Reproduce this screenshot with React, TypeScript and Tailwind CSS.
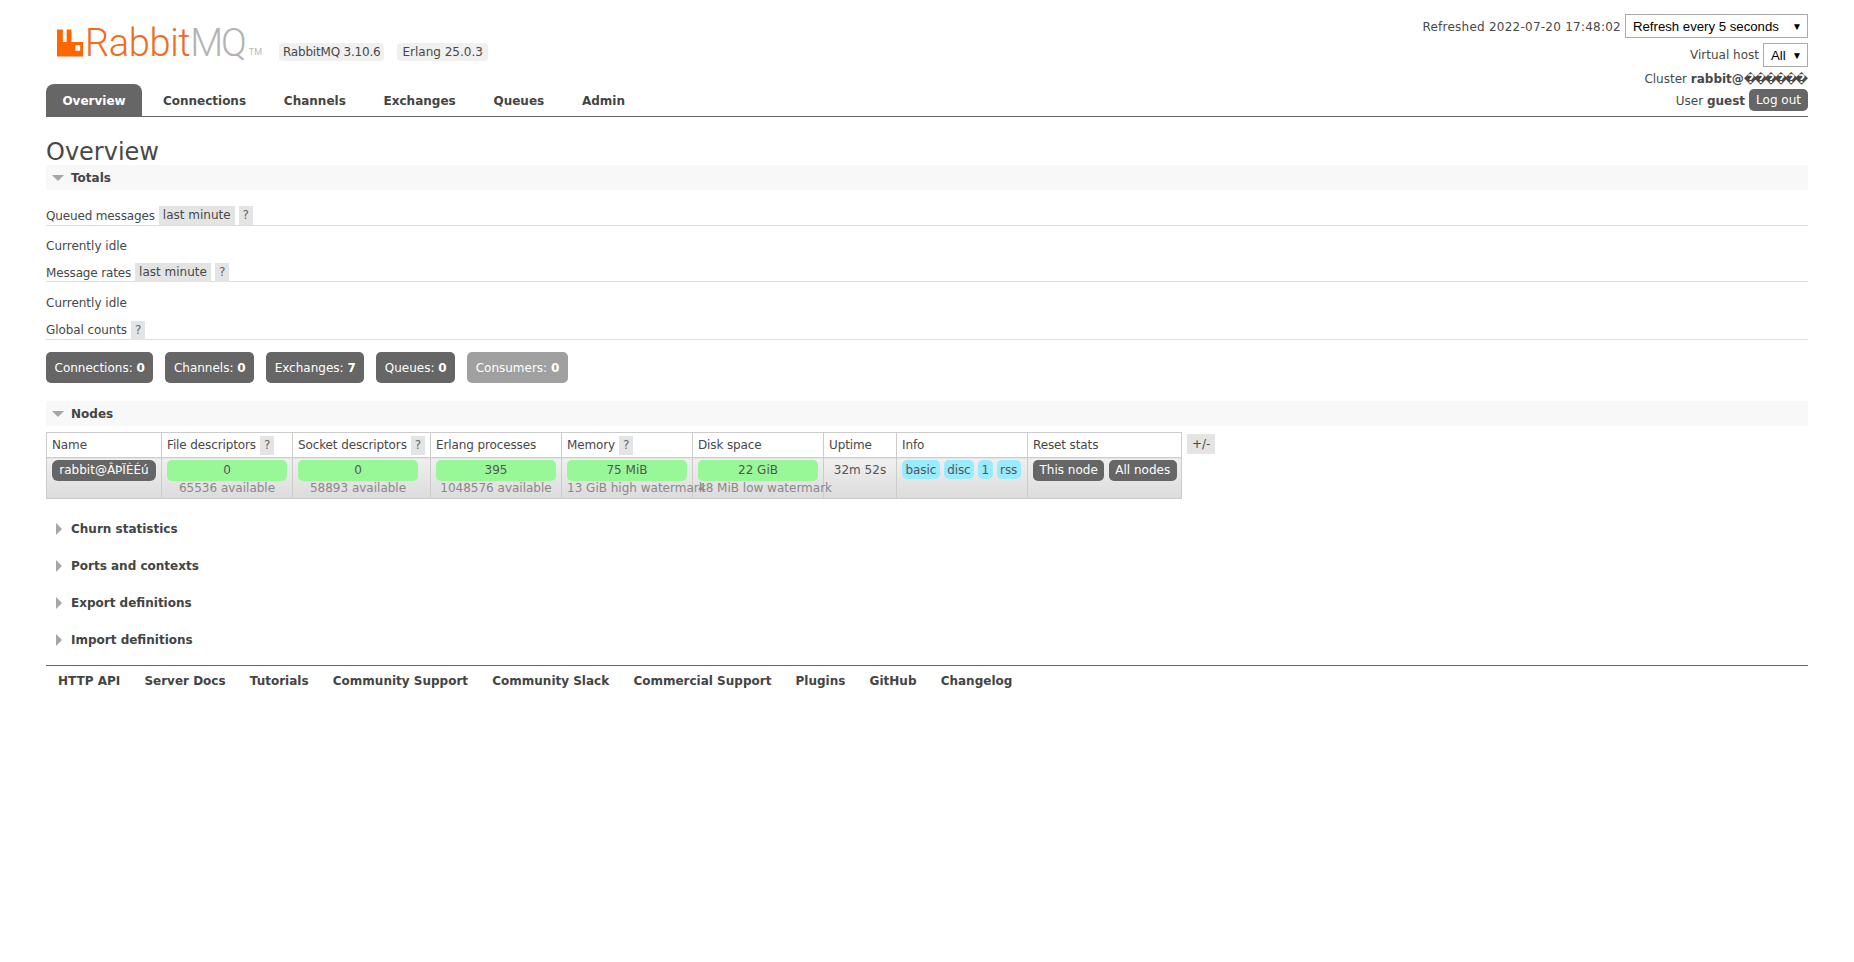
const TABS = ["Overview", "Connections", "Channels", "Exchanges", "Queues", "Admin"];
const FOOTER = ["HTTP API", "Server Docs", "Tutorials", "Community Support", "Community Slack", "Commercial Support", "Plugins", "GitHub", "Changelog"];
const COUNTS = [
  { label: "Connections:", value: "0" },
  { label: "Channels:", value: "0" },
  { label: "Exchanges:", value: "7" },
  { label: "Queues:", value: "0" },
  { label: "Consumers:", value: "0", disabled: true },
];
const COLLAPSED = ["Churn statistics", "Ports and contexts", "Export definitions", "Import definitions"];

function Help() {
  return <span className="ml-[4px] inline-block h-[19px] bg-[#e4e4e4] px-[4px] leading-[19px] tracking-normal text-[#666]">?</span>;
}

function SelectBox({ label, className }: { label: string; className: string }) {
  return (
    <div className={"flex items-center justify-between border border-[#aaa] bg-white pl-[7px] pr-[5px] font-['Liberation_Sans',sans-serif] text-[13.2px] text-black " + className}>
      <span className="pt-[1px]">{label}</span>
      <span className="text-[10px]">▼</span>
    </div>
  );
}

function SectionHeader({ title, open }: { title: string; open?: boolean }) {
  return (
    <div className={"flex h-[25px] items-center " + (open ? "bg-[#f8f8f8]" : "")}>
      <div className="flex w-[25px] justify-center">
        {open ? (
          <svg width="12" height="6" viewBox="0 0 12 6" className="ml-[-1px]"><path d="M0 0h12L6 6z" fill="#a6a6a6" /></svg>
        ) : (
          <svg width="6" height="12" viewBox="0 0 6 12" className="ml-[1px]"><path d="M0 0v12l6-6z" fill="#a6a6a6" /></svg>
        )}
      </div>
      <h2 className="text-[12px] font-bold text-[#444]">{title}</h2>
    </div>
  );
}

function Logo() {
  return (
    <div className="flex w-[205px] items-end">
      <svg width="27" height="28" viewBox="0 0 27 28" className="mb-[2px]">
        <path fillRule="evenodd" fill="#ff6600" d="M0 0h6v13h4V0h5v13h12v15H0zM19 16v6h5v-6z" />
      </svg>
      <span className="ml-[2px] font-['Roboto',sans-serif] text-[38px] font-light leading-[32px] tracking-[-0.4px] text-[#f26b1d]">Rabbit</span>
      <span className="font-['Roboto',sans-serif] text-[38px] font-light leading-[32px] tracking-[-2px] text-[#b3b3b3]">MQ</span>
      <span className="mb-[2px] ml-[4px] font-['Roboto',sans-serif] text-[9px] leading-[10px] text-[#bbb]">TM</span>
    </div>
  );
}

function Bar({ value, sub }: { value: string; sub: string }) {
  return (
    <div className="w-[120px] whitespace-nowrap text-center">
      <div className="h-[21px] rounded-[5px] bg-[#98f898] leading-[21px] text-[#555]">{value}</div>
      <div className="leading-[15px] text-[#888]">{sub}</div>
    </div>
  );
}

const cell = "border border-[#ccc] bg-gradient-to-b from-[#f0f0f0] to-[#dcdcdc] px-[5px] pt-[2px] align-top";
const head = "h-[25px] whitespace-nowrap border border-[#ccc] bg-white px-[5px] text-left font-normal tracking-[-0.12px] text-[#484848]";

function Badge({ children }: { children: string }) {
  return <span className="inline-block h-[19px] rounded-[5px] bg-[#99ebff] px-[3.5px] leading-[20px] tracking-[-0.1px] text-[#555]">{children}</span>;
}

function DarkButton({ children }: { children: string }) {
  return <span className="inline-block h-[21px] whitespace-nowrap rounded-[5px] bg-[#666] px-[6.5px] font-normal leading-[21px] text-white">{children}</span>;
}

export default function App() {
  return (
    <div className="min-h-[962px] bg-white px-[46px] font-['DejaVu_Sans','Verdana',sans-serif] text-[12px] text-[#484848]">
      {/* Header */}
      <header className="flex h-[117px] justify-between border-b border-[#666]">
        <div className="flex flex-col justify-between">
          <div className="flex items-end pl-[11px] pt-[27px]">
            <Logo />
            <span className="mb-[-2px] ml-[17px] rounded-[4px] bg-[#f0f0f0] px-[4px] py-[2px] leading-[14px] tracking-[-0.2px]">RabbitMQ 3.10.6</span>
            <span className="mb-[-2px] ml-[13px] rounded-[4px] bg-[#f0f0f0] px-[5px] py-[2px] leading-[14px]">Erlang 25.0.3</span>
          </div>
          <nav className="flex">
            {TABS.map((tab, i) => (
              <a
                key={tab}
                className={
                  "flex h-[32px] items-center pt-[2px] font-bold " +
                  (i === 0 ? "mr-[2px] w-[96px] justify-center rounded-t-[8px] bg-[#666] text-white" : "px-[18.9px] text-[#444]")
                }
              >
                {tab}
              </a>
            ))}
          </nav>
        </div>
        <div className="flex flex-col items-end pt-[14px]">
          <div className="flex h-[24px] items-center gap-[4px]">
            <span className="pt-[1px] tracking-[0.24px]">Refreshed 2022-07-20 17:48:02</span>
            <SelectBox label="Refresh every 5 seconds" className="h-[24px] w-[183px]" />
          </div>
          <div className="mt-[5px] flex h-[24px] items-center gap-[4px]">
            <span>Virtual host</span>
            <SelectBox label="All" className="h-[24px] w-[45px]" />
          </div>
          <div className="mt-[2px] h-[20px] leading-[20px]">
            Cluster <b>rabbit@<span className="mr-[3.2px] tracking-[-3.2px]">������</span></b>
          </div>
          <div className="flex items-center gap-[4px]">
            <span className="pt-[1px]">
              User <b>guest</b>
            </span>
            <span className="h-[22px] rounded-[5px] bg-[#666] px-[7px] leading-[22px] text-white">Log out</span>
          </div>
        </div>
      </header>

      <h1 className="mt-[21px] h-[27px] text-[24px] font-normal leading-[28px] text-[#484848]">Overview</h1>

      {/* Totals */}
      <SectionHeader title="Totals" open />
      <div className="mt-[15px] flex h-[21px] items-center border-b border-[#ddd] pt-[1px]">
        <span className="tracking-[-0.15px]">Queued messages</span>
        <span className="ml-[4px] h-[19px] bg-[#e4e4e4] px-[4px] leading-[19px]">last minute</span>
        <Help />
      </div>
      <p className="mt-[13px] h-[14px] leading-[14px]">Currently idle</p>
      <div className="mt-[7px] flex h-[22px] items-center border-b border-[#ddd] pt-[4px]">
        <span className="tracking-[-0.15px]">Message rates</span>
        <span className="ml-[4px] h-[19px] bg-[#e4e4e4] px-[4px] leading-[19px]">last minute</span>
        <Help />
      </div>
      <p className="mt-[14px] h-[14px] leading-[14px]">Currently idle</p>
      <div className="mt-[9px] flex h-[21px] items-center border-b border-[#ddd] pt-[2px]">
        <span className="tracking-[-0.1px]">Global counts</span>
        <Help />
      </div>
      <div className="mt-[12px] flex gap-[12px]">
        {COUNTS.map((c) => (
          <div
            key={c.label}
            className={"flex h-[31px] items-center rounded-[5px] px-[8.5px] text-white " + (c.disabled ? "bg-[#a0a0a0]" : "bg-[#666]")}
          >
            {c.label}&nbsp;<b>{c.value}</b>
          </div>
        ))}
      </div>

      {/* Nodes */}
      <div className="mt-[18px]">
        <SectionHeader title="Nodes" open />
      </div>
      <div className="mt-[6px] flex items-start">
        <table className="w-[1135px] table-fixed border-collapse">
          <colgroup>
            <col className="w-[115px]" />
            <col className="w-[131px]" />
            <col className="w-[138px]" />
            <col className="w-[131px]" />
            <col className="w-[131px]" />
            <col className="w-[131px]" />
            <col className="w-[73px]" />
            <col className="w-[131px]" />
            <col className="w-[154px]" />
          </colgroup>
          <thead>
            <tr>
              <th className={head}>Name</th>
              <th className={head}>File descriptors<Help /></th>
              <th className={head}>Socket descriptors<Help /></th>
              <th className={head}>Erlang processes</th>
              <th className={head}>Memory<Help /></th>
              <th className={head}>Disk space</th>
              <th className={head}>Uptime</th>
              <th className={head}>Info</th>
              <th className={head}>Reset stats</th>
            </tr>
          </thead>
          <tbody>
            <tr className="h-[41px]">
              <td className={cell}>
                <span className="block h-[21px] whitespace-nowrap rounded-[6px] bg-[#666] text-center leading-[21px] text-white">rabbit@ÂÞÏÈÉú</span>
              </td>
              <td className={cell}><Bar value="0" sub="65536 available" /></td>
              <td className={cell}><Bar value="0" sub="58893 available" /></td>
              <td className={cell}><Bar value="395" sub="1048576 available" /></td>
              <td className={cell}><Bar value="75 MiB" sub="13 GiB high watermark" /></td>
              <td className={cell}><Bar value="22 GiB" sub="48 MiB low watermark" /></td>
              <td className={cell + " text-center leading-[21px] text-[#555]"}>32m 52s</td>
              <td className={cell}>
                <div className="flex gap-[4px]">
                  <Badge>basic</Badge>
                  <Badge>disc</Badge>
                  <Badge>1</Badge>
                  <Badge>rss</Badge>
                </div>
              </td>
              <td className={cell}>
                <div className="flex gap-[4.5px]">
                  <DarkButton>This node</DarkButton>
                  <DarkButton>All nodes</DarkButton>
                </div>
              </td>
            </tr>
          </tbody>
        </table>
        <span className="ml-[5px] mt-[2px] h-[20px] bg-[#e4e4e4] px-[5px] leading-[20px]">+/-</span>
      </div>

      {/* Collapsed sections */}
      <div className="mt-[17px] flex flex-col gap-[12px]">
        {COLLAPSED.map((title) => (
          <SectionHeader key={title} title={title} />
        ))}
      </div>

      {/* Footer */}
      <footer className="mt-[13px] flex gap-[24.2px] border-t border-[#666] pl-[12px] pt-[6px] font-bold text-[#444]">
        {FOOTER.map((link) => (
          <a key={link}>{link}</a>
        ))}
      </footer>
    </div>
  );
}
